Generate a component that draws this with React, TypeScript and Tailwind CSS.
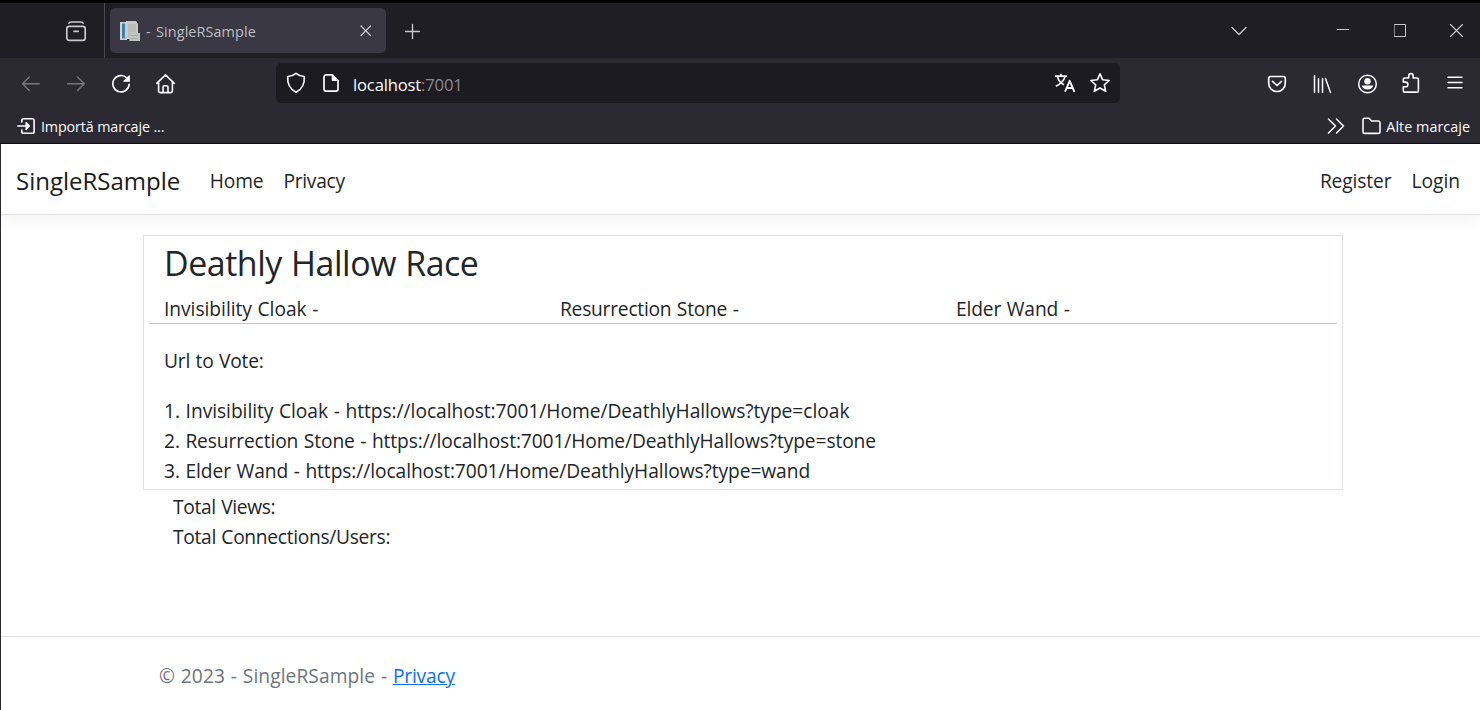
import type { ReactNode } from "react";

function Icon({ className, box, children }: { className: string; box: string; children: ReactNode }) {
  return (
    <svg
      className={`shrink-0 ${className}`}
      viewBox={box}
      fill="none"
      stroke="currentColor"
      strokeWidth="1.5"
      strokeLinecap="round"
      strokeLinejoin="round"
    >
      {children}
    </svg>
  );
}

function TabBar() {
  return (
    <div className="flex h-[55px] items-center bg-[#1f1e25] text-[#c9c9cd]">
      <div className="flex h-full w-[105px] items-center border-r border-[#4a4950] pl-[65px]">
        <Icon className="mt-0.5 size-[22px]" box="0 0 22 22">
          <path d="M3.800 2.300c.5-.9 1.100-1.300 2-1.300h10.400c.9 0 1.500.4 2 1.300" />
          <rect x="1.800" y="5.300" width="18.400" height="14" rx="2.400" strokeWidth="1.700" />
          <path d="M9 10.300h4.200" strokeWidth="1.700" />
        </Icon>
      </div>
      <div className="ml-[5px] flex h-[45px] w-[276px] items-center rounded-[5px] bg-[#3a3943] pl-2.5">
        <Icon className="size-5" box="0 0 20 20">
          <g stroke="none">
            <path d="M0 1h7v18H0z" fill="#cfd3d5" />
            <path d="M2 2.500h3v15H2z" fill="#3f83ac" />
            <path d="M6 0h10l2 3v15H6z" fill="#c9c9c6" />
            <path d="M8 3h8v13H8z" fill="#b9babb" />
            <path d="M9.500 11h5l1 1h4.500v8H9.500z" fill="#c3c4c4" />
            <path d="M11 14h7v1h-7zM11 17h7v1h-7z" fill="#a5a6a8" />
          </g>
        </Icon>
        <span className="mt-0.5 ml-[6px] w-[205px] whitespace-pre text-[14.400px] tracking-[0.1px] text-[#bdbdc1] [word-spacing:1.5px]">- SingleRSample</span>
        <Icon className="ml-[7px] size-4" box="0 0 16 16">
          <path d="M3 3l9.500 9.500M12.500 3L3 12.500" strokeWidth="1.200" />
        </Icon>
      </div>
      <Icon className="ml-[18px] size-4" box="0 0 16 16">
        <path d="M8.500 1.500v14M1.500 8.500h14" strokeWidth="1.400" />
      </Icon>
      <div className="flex-1" />
      <Icon className="h-[10px] w-4" box="0 0 16 10">
        <path d="M1 1.500l7 7 7-7" strokeWidth="1.400" />
      </Icon>
      <Icon className="ml-[90px] h-3 w-[12px]" box="0 0 12 12">
        <path d="M0 4.500h12" strokeWidth="1" strokeLinecap="butt" />
      </Icon>
      <Icon className="ml-[45px] h-[14px] w-[12px]" box="0 0 12 14">
        <path d="M.5 .5h11v12H.5z" strokeWidth="1" strokeLinejoin="miter" />
      </Icon>
      <Icon className="mr-[17px] ml-[44px] size-[13px]" box="0 0 13 13">
        <path d="M.5 .5l12 12M12.500 .5l-12 12" strokeWidth="1.100" />
      </Icon>
    </div>
  );
}

function AddressBar() {
  return (
    <div className="ml-[100px] flex h-10 w-[844px] items-center rounded-[5px] bg-[#1c1b22] pl-2.5">
      <Icon className="h-[22px] w-5" box="0 0 20 22">
        <path d="M10 1.300c2.500 2 5.200 3 8.300 3.300.4 6.500-2 12.500-8.300 15.700C3.700 17.100 1.300 11.100 1.700 4.600 4.800 4.300 7.500 3.300 10 1.300z" strokeWidth="1.600" />
      </Icon>
      <Icon className="ml-4 h-5 w-[18px]" box="0 0 18 20">
        <path d="M10.300 1.900H4a2 2 0 0 0-2 2v12.200a2 2 0 0 0 2 2h10a2 2 0 0 0 2-2V7.500z" strokeWidth="1.700" />
        <path d="M10.300 1.900v5.600H16z" fill="currentColor" strokeWidth="1.200" />
      </Icon>
      <span className="mt-1 ml-[13px] whitespace-pre text-[16.600px] tracking-[-0.16px] text-[#fbfbfe]">
        localhost<span className="text-[#8c8b91]">:7001</span>
      </span>
      <div className="flex-1" />
      <Icon className="h-5 w-[22px]" box="0 0 22 20">
        <path d="M1 3.200h12M7 .8v2.400M3.500 3.600c.8 3.500 3 6.400 6.500 8.200M11 3.600C10 7.400 6.500 10.900 1.800 13.300" strokeWidth="1.700" strokeLinecap="butt" />
        <path d="M11 18.800L15.700 7.800l4.700 11M12.700 15h6.200" strokeWidth="1.900" strokeLinecap="butt" />
      </Icon>
      <Icon className="mr-[9px] ml-[13px] size-[22px]" box="0 0 22 22">
        <path d="M11 1.800l2.700 6 6.500.7-4.900 4.300 1.400 6.500-5.700-3.300-5.700 3.300 1.400-6.500-4.900-4.300 6.500-.7z" strokeWidth="1.600" />
      </Icon>
    </div>
  );
}

function Toolbar() {
  return (
    <div className="flex h-[50px] items-center pl-5">
      <Icon className="size-5 text-[#77767d]" box="0 0 20 20">
        <path d="M19.300 10.800H2.500M9.300 4L2.500 10.800l6.800 6.800" strokeWidth="1.400" />
      </Icon>
      <Icon className="ml-[25px] size-5 text-[#77767d]" box="0 0 20 20">
        <path d="M2.500 10.800h17M12.500 4l6.900 6.800-6.900 6.800" strokeWidth="1.400" />
      </Icon>
      <Icon className="ml-[26px] size-5" box="0 0 20 20">
        <path d="M18.200 11.300a8.200 8.200 0 1 1-2.300-6.300" strokeWidth="1.700" />
        <path d="M18.300 2.800v5.400h-5.400z" fill="currentColor" strokeWidth="1.200" />
      </Icon>
      <Icon className="ml-[24px] size-[21px]" box="0 0 21 21">
        <path d="M1.700 10.300L10.500 1.900l8.800 8.400M3.600 9.300v8.500c0 1 .8 1.800 1.800 1.800h10.200c1 0 1.800-.8 1.800-1.800V9.300M8 19.300v-5.200c0-.8.600-1.300 1.300-1.300h2.400c.7 0 1.300.5 1.300 1.300v5.200" strokeWidth="1.600" />
      </Icon>
      <AddressBar />
      <Icon className="mt-0.5 ml-[147px] h-[18px] w-5" box="0 0 20 18">
        <path d="M3.500 1.500h13c1 0 1.800.8 1.800 1.800v4.900a8.300 8.300 0 0 1-16.600 0V3.300c0-1 .8-1.800 1.800-1.800zM5.500 6.300l4.500 4.200 4.500-4.200" strokeWidth="1.700" />
      </Icon>
      <Icon className="mt-0.5 ml-[26px] h-5 w-[19px]" box="0 0 19 20">
        <path d="M1.500 1.500v17M5.500 4.500v14M9.500 4.500v14M12.500 4.500l5 14" strokeWidth="1.500" />
      </Icon>
      <Icon className="mt-px ml-[25px] size-[21px]" box="0 0 21 21">
        <circle cx="10.500" cy="11" r="8.800" strokeWidth="1.500" />
        <circle cx="10.500" cy="8.200" r="3.200" fill="currentColor" stroke="none" />
        <path d="M4.800 12.500h11.400c-.5 2.600-2.800 4-5.700 4s-5.200-1.400-5.700-4z" fill="currentColor" stroke="none" />
      </Icon>
      <Icon className="ml-[23px] h-[22px] w-5" box="0 0 20 22">
        <path d="M2.300 9V7.300c0-.8.600-1.300 1.300-1.300h4.100V3.800a2.200 2.200 0 0 1 4.400 0V6H16c.8 0 1.400.6 1.400 1.400v11.300c0 .8-.6 1.400-1.400 1.400H3.600c-.7 0-1.300-.6-1.300-1.400v-4h2.300a2.300 2.300 0 0 0 0-4.600H2.300z" strokeWidth="1.600" />
      </Icon>
      <Icon className="ml-[26px] h-[14px] w-[16px]" box="0 0 16 14">
        <path d="M1 1.200h14M1 6.500h14M1 11.800h14" strokeWidth="1.400" />
      </Icon>
    </div>
  );
}

function Bookmarks() {
  return (
    <div className="flex h-9 items-center border-b border-[#0c0c0d] pr-[10px] pl-[17px] text-[14.300px]">
      <Icon className="mt-px h-[18px] w-5" box="0 0 20 18">
        <path d="M4.800 5V3.500c0-1 .8-1.800 1.800-1.800h8.700c1 0 1.800.8 1.800 1.800v11c0 1-.8 1.800-1.800 1.800H6.600c-1 0-1.800-.8-1.800-1.800V13M.8 9h10" strokeWidth="1.600" />
        <path d="M9 5.500L12.500 9 9 12.500z" fill="currentColor" strokeWidth="1.200" />
      </Icon>
      <span className="mt-[3px] ml-1 whitespace-pre tracking-[-0.12px]">Importă marcaje ...</span>
      <div className="flex-1" />
      <Icon className="h-[18px] w-[18px]" box="0 0 18 18">
        <path d="M1.500 2l7 7-7 7M9.500 2l7 7-7 7" strokeWidth="1.500" />
      </Icon>
      <Icon className="ml-[17px] h-[18px] w-5" box="0 0 20 18">
        <path d="M1 3c0-1 .7-1.700 1.700-1.700H7L9.500 4h6.800c1 0 1.700.7 1.700 1.700v9c0 1-.7 1.700-1.700 1.700H2.700c-1 0-1.700-.7-1.700-1.700z" strokeWidth="1.600" />
      </Icon>
      <span className="mt-[3px] ml-1 whitespace-pre tracking-[0.06px]">Alte marcaje</span>
    </div>
  );
}

const hallows = [
  { name: "Invisibility Cloak", type: "cloak", head: "tracking-[-0.03px]", line: "tracking-[-0.04px]" },
  { name: "Resurrection Stone", type: "stone", head: "tracking-[-0.23px]", line: "tracking-[-0.11px]" },
  { name: "Elder Wand", type: "wand", head: "tracking-[-0.13px]", line: "tracking-[-0.08px]" },
];

export default function App() {
  return (
    <div className="flex h-[710px] w-[1480px] flex-col overflow-hidden bg-white font-['Open_Sans','Noto_Sans',sans-serif]">
      <div className="border-t-[3px] border-black bg-[#2b2a33] text-[#fbfbfe]">
        <TabBar />
        <Toolbar />
        <Bookmarks />
      </div>
      <div className="flex flex-1 flex-col border-l border-[#2b2a33] text-[19.200px] leading-[30px] text-[#212529] [word-spacing:0.7px]">
        <nav className="flex h-[71px] items-center border-b border-[#dfe0e1] pt-1 pr-5 pl-[15px] whitespace-pre shadow-[0_5px_15px_rgba(0,0,0,0.05)]">
          <a className="text-[24px] text-[#1a1a1a]">SingleRSample</a>
          <a className="ml-[29.5px] tracking-[-0.15px]">Home</a>
          <a className="ml-5 tracking-[-0.25px]">Privacy</a>
          <div className="flex-1" />
          <a className="tracking-[-0.12px]">Register</a>
          <a className="ml-5">Login</a>
        </nav>
        <main className="mt-5 ml-[142px] w-[1200px]">
          <section className="h-[255px] border border-[#dee2e6] px-[5px]">
            <h1 className="pt-1.5 pl-[15px] text-[33.900px] leading-[42px] tracking-[-0.42px]">Deathly Hallow Race</h1>
            <div className="mt-2.5 grid h-[30px] grid-cols-3 border-b border-[#c6c7c8] whitespace-pre">
              {hallows.map((h) => (
                <div key={h.type} className={`pl-[15px] ${h.head}`}>{h.name} -</div>
              ))}
            </div>
            <p className="mt-[22px] pl-[15px] tracking-[-0.2px]">Url to Vote:</p>
            <ol className="mt-5 pl-[15px] whitespace-pre">
              {hallows.map((h, i) => (
                <li key={h.type} className={h.line}>
                  {i + 1}. {h.name} - https://localhost:7001/Home/DeathlyHallows?type={h.type}
                </li>
              ))}
            </ol>
          </section>
          <div className="mt-0.5 pl-[30px]">
            <p className="tracking-[-0.33px]">Total Views:</p>
            <p className="tracking-[-0.3px]">Total Connections/Users:</p>
          </div>
        </main>
        <footer className="mt-auto h-[74px] border-t border-[#dee2e6] pt-6 pl-[158px] whitespace-pre text-[#6c757d]">
          <span className="tracking-[0.08px]">© 2023 - SingleRSample - </span>
          <a className="tracking-[-0.2px] text-[#0d6efd] underline">Privacy</a>
        </footer>
      </div>
    </div>
  );
}
